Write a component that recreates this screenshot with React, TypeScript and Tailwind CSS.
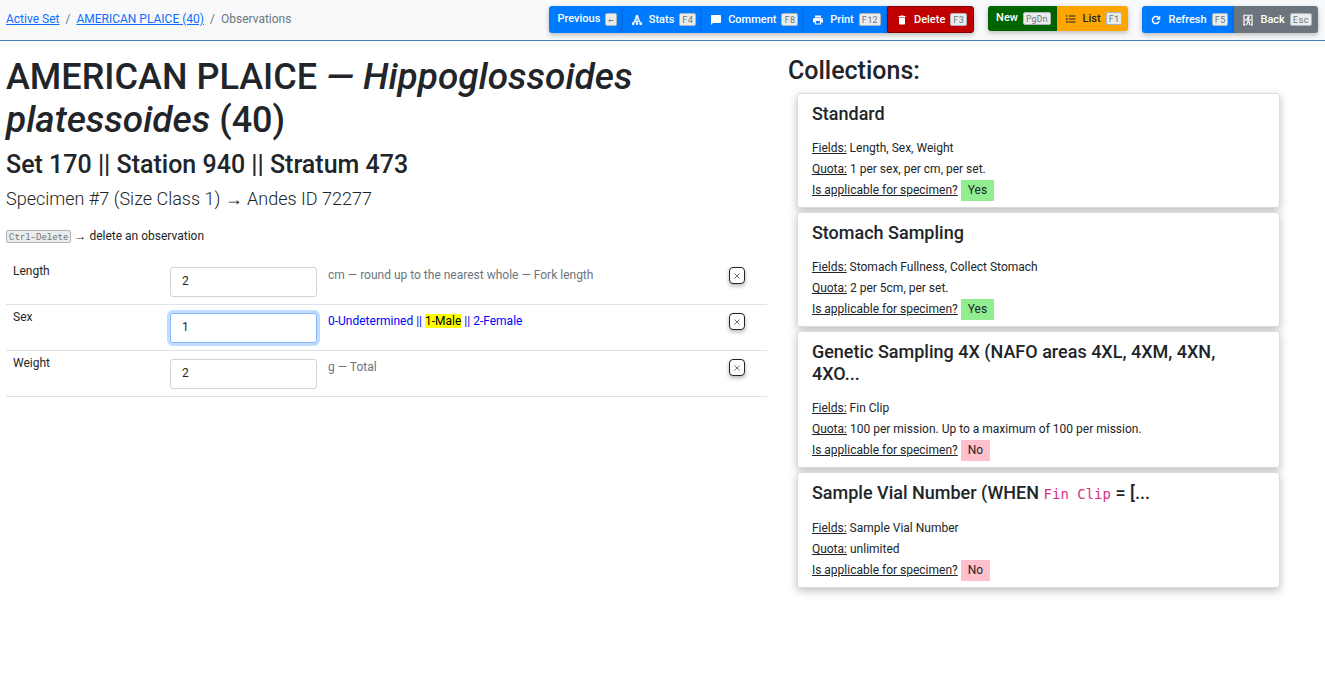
import { useState, type ReactNode } from "react";
import { MdPrint, MdDelete, MdChatBubble, MdFormatListNumbered } from "react-icons/md";

function Key({ children }: { children: ReactNode }) {
  return (
    <kbd className="inline-block rounded-[2px] border border-[#adb5bd] bg-[#eaecec] px-[2px] font-['Roboto_Mono','DejaVu_Sans_Mono',monospace] text-[9px] leading-[11px] font-normal text-[#6c757d]">
      {children}
    </kbd>
  );
}

function Arrow() {
  return <span className="font-['Liberation_Sans',sans-serif]">→</span>;
}

function StatsIcon() {
  return (
    <svg viewBox="0 0 24 24" className="size-3" fill="none" stroke="currentColor" strokeWidth="2.4" aria-hidden="true">
      <path d="M11 5 5 19M13 5l6 14M12 9v10M7 15h10" />
      <circle cx="12" cy="5" r="2.8" fill="currentColor" stroke="none" />
      <circle cx="4.5" cy="19.5" r="2.8" fill="currentColor" stroke="none" />
      <circle cx="12" cy="19.5" r="2.4" fill="currentColor" stroke="none" />
      <circle cx="19.5" cy="19.5" r="2.8" fill="currentColor" stroke="none" />
    </svg>
  );
}

function RefreshIcon() {
  return (
    <svg viewBox="0 0 24 24" className="size-3" fill="none" stroke="currentColor" strokeWidth="3" aria-hidden="true">
      <path d="M18.5 14.5A7 7 0 1 1 17 7.2" />
      <path d="M20.5 3v8.5H12z" fill="currentColor" stroke="none" />
    </svg>
  );
}

function BackIcon() {
  return (
    <svg viewBox="0 0 24 24" className="size-3" fill="none" stroke="currentColor" strokeWidth="2.4" aria-hidden="true">
      <path d="M4 23V2.5h16V23M2 22h5M17 22h5" />
      <circle cx="13" cy="6.5" r="2.4" fill="currentColor" stroke="none" />
      <path d="M12 9v6l-3 7M12 14l3 3v5M8 14v-3l4-2 3 3h3" />
    </svg>
  );
}

type ToolProps = { icon?: ReactNode; label: string; hotkey: string; tone: string; size?: string };

function Tool({ icon, label, hotkey, tone, size = "h-[27px]" }: ToolProps) {
  return (
    <button
      type="button"
      className={`flex items-center pr-[6px] pl-2 text-[11px] leading-4 font-medium shadow-[0_2px_5px_rgba(0,0,0,0.25)] first:rounded-l-[3px] last:rounded-r-[3px] ${size} ${tone}`}
    >
      {icon && <span className="mr-[6px]">{icon}</span>}
      <span className={icon ? "mr-[5px]" : "mr-[5px] pb-[2px]"}>{label}</span>
      <Key>{hotkey}</Key>
    </button>
  );
}

const BLUE = "bg-[#007bff] text-white";

type Observation = { id: string; label: string; value: string; hint: ReactNode };

const observations: Observation[] = [
  {
    id: "length",
    label: "Length",
    value: "2",
    hint: <span className="text-[#6c757d]">cm — round up to the nearest whole — Fork length</span>,
  },
  {
    id: "sex",
    label: "Sex",
    value: "1",
    hint: (
      <span className="text-[#0000ff]">
        0-Undetermined || <mark className="bg-[#ffff00] text-black">1-Male</mark> || 2-Female
      </span>
    ),
  },
  { id: "weight", label: "Weight", value: "2", hint: <span className="text-[#6c757d]">g — Total</span> },
];

function ObservationRow({ id, label, value, hint }: Observation) {
  const [current, setCurrent] = useState(value);
  return (
    <tr className="border-b border-[#dee2e6] align-top">
      <td className="w-[157px] px-[7px] pt-[3px]">
        <label htmlFor={id}>{label}</label>
      </td>
      <td className="w-[161px] px-[7px] pt-2 pb-[7px]">
        <input
          id={id}
          value={current}
          autoFocus={id === "sex"}
          onChange={(e) => setCurrent(e.target.value)}
          className="block h-[30px] w-full rounded-[3px] border border-[#ced4da] bg-white px-[11px] pb-[2px] text-[12px] caret-transparent outline-none focus:border-[#86b7fe] focus:shadow-[0_0_0_3px_#c2dbfe]"
        />
      </td>
      <td className="px-1 pt-[7px]">{hint}</td>
      <td className="w-[45px] px-[7px] pt-2">
        <button
          type="button"
          aria-label={`Delete ${label}`}
          className="flex h-[17px] w-4 items-center justify-center rounded-[4px] border border-[#212529] bg-white shadow-[0_2px_4px_rgba(0,0,0,0.3)]"
        >
          <svg viewBox="0 0 6 6" className="size-[6px]" stroke="#6c757d" strokeWidth="1" aria-hidden="true">
            <path d="M.5.5l5 5M5.5.5l-5 5" />
          </svg>
        </button>
      </td>
    </tr>
  );
}

type CollectionProps = { title: ReactNode; fields: string; quota: string; applicable: boolean };

const collections: CollectionProps[] = [
  { title: "Standard", fields: "Length, Sex, Weight", quota: "1 per sex, per cm, per set.", applicable: true },
  { title: "Stomach Sampling", fields: "Stomach Fullness, Collect Stomach", quota: "2 per 5cm, per set.", applicable: true },
  {
    title: "Genetic Sampling 4X (NAFO areas 4XL, 4XM, 4XN, 4XO...",
    fields: "Fin Clip",
    quota: "100 per mission. Up to a maximum of 100 per mission.",
    applicable: false,
  },
  {
    title: (
      <>
        Sample Vial Number (WHEN{" "}
        <code className="font-['DejaVu_Sans_Mono',monospace] text-[14px] font-normal text-[#d63384]">Fin Clip</code> = [...
      </>
    ),
    fields: "Sample Vial Number",
    quota: "unlimited",
    applicable: false,
  },
];

function CollectionCard({ title, fields, quota, applicable }: CollectionProps) {
  return (
    <section className="rounded-[3px] border border-[#dcdcdc] bg-white px-[14px] pt-[9px] pb-[6px] shadow-[0_3px_8px_rgba(0,0,0,0.25)]">
      <h3 className="mb-[13px] text-[18px] leading-[22px] font-medium">{title}</h3>
      <p className="leading-[21px]">
        <u>Fields:</u> {fields}
      </p>
      <p className="leading-[21px]">
        <u>Quota:</u> {quota}
      </p>
      <p className="leading-[21px]">
        <u>Is applicable for specimen?</u>{" "}
        <span className={`inline-block px-[7px] ${applicable ? "bg-[#90ee90]" : "bg-[#ffc0cb]"}`}>
          {applicable ? "Yes" : "No"}
        </span>
      </p>
    </section>
  );
}

export default function App() {
  return (
    <div className="min-h-screen bg-white font-['Roboto',sans-serif] text-[12px] leading-[18px] text-[#212529]">
      <header className="flex h-[41px] items-start justify-between border-b border-[#4a7ab5] bg-[#f8f9fa] pr-[7px] pl-[6px]">
        <nav aria-label="Breadcrumb" className="flex gap-[6px] pt-[10px] text-[#6c757d]">
          <a href="#active-set" className="text-[#0d6efd] underline">Active Set</a>
          <span>/</span>
          <a href="#catch" className="text-[#0d6efd] underline">AMERICAN PLAICE (40)</a>
          <span>/</span>
          <span>Observations</span>
        </nav>
        <div className="flex items-start gap-[14px] pt-[6px]">
          <div className="flex">
            <Tool label="Previous" hotkey="←" tone={BLUE} />
            <Tool icon={<StatsIcon />} label="Stats" hotkey="F4" tone={BLUE} />
            <Tool icon={<MdChatBubble className="size-3" />} label="Comment" hotkey="F8" tone={BLUE} />
            <Tool icon={<MdPrint className="size-3" />} label="Print" hotkey="F12" tone={BLUE} />
            <Tool
              icon={<MdDelete className="size-3" />}
              label="Delete"
              hotkey="F3"
              tone="border border-[#800000] bg-[#c00000] text-white"
            />
          </div>
          <div className="flex">
            <Tool label="New" hotkey="PgDn" tone="bg-[#006400] text-white" size="h-[25px]" />
            <Tool
              icon={<MdFormatListNumbered className="size-3" />}
              label="List"
              hotkey="F1"
              tone="bg-[#ffa500] text-[#212529]"
              size="h-[25px]"
            />
          </div>
          <div className="flex">
            <Tool icon={<RefreshIcon />} label="Refresh" hotkey="F5" tone={BLUE} />
            <Tool icon={<BackIcon />} label="Back" hotkey="Esc" tone="bg-[#6c757d] text-white" />
          </div>
        </div>
      </header>
      <main className="grid grid-cols-12">
        <div className="col-span-7 px-[6px] pt-[15px]">
          <h1 className="mb-2 text-[36px] leading-[43px] font-medium">
            AMERICAN PLAICE <i className="text-[37px] leading-none">— Hippoglossoides platessoides</i> (40)
          </h1>
          <h2 className="mb-[5px] text-[25px] leading-[30px] font-medium">Set 170 || Station 940 || Stratum 473</h2>
          <p className="mb-[14px] text-[18px] leading-[28px] font-light">
            Specimen #7 (Size Class 1) <Arrow /> Andes ID 72277
          </p>
          <p className="mb-[14px]">
            <Key>Ctrl-Delete</Key> <Arrow /> delete an observation
          </p>
          <table className="w-full table-fixed border-collapse">
            <tbody>
              {observations.map((row) => (
                <ObservationRow key={row.id} {...row} />
              ))}
            </tbody>
          </table>
        </div>
        <aside className="col-span-5 pt-[15px] pl-[15px]">
          <h2 className="mb-[7px] text-[25px] leading-[30px] font-medium">Collections:</h2>
          <div className="mr-[45px] ml-[9px] flex flex-col gap-1">
            {collections.map((item) => (
              <CollectionCard key={item.fields} {...item} />
            ))}
          </div>
        </aside>
      </main>
    </div>
  );
}
